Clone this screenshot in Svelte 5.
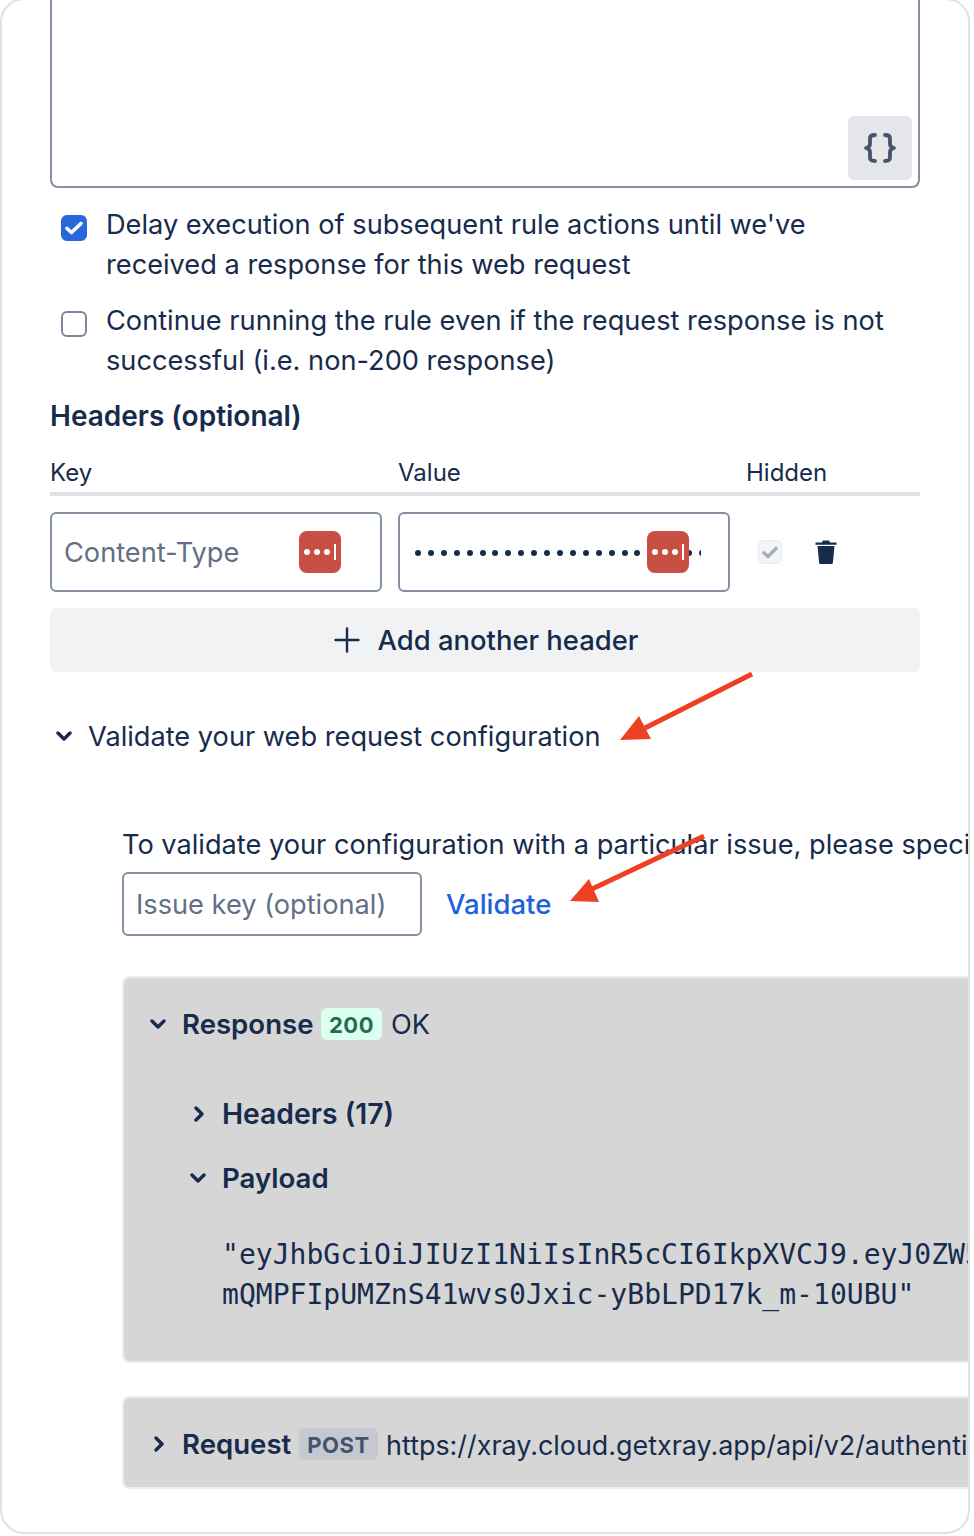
<script>
  const dots = Array.from({ length: 23 });
</script>

<main class="page">
  <section class="card">
    <div class="editor">
      <button class="code-btn" aria-label="Code">
        <svg width="34" height="34" viewBox="0 0 34 34" fill="none" stroke="#44546f" stroke-width="3.800" stroke-linecap="round" stroke-linejoin="round">
          <path d="M12 4c-3.500 0-5 1-5 3.500V13c0 2.500-1.500 3.500-4 4 2.500.5 4 1.500 4 4v5.500c0 2.500 1.500 3.500 5 3.500" />
          <path d="M22 4c3.500 0 5 1 5 3.500V13c0 2.500 1.500 3.500 4 4-2.500.5-4 1.500-4 4v5.500c0 2.500-1.500 3.500-5 3.500" />
        </svg>
      </button>
    </div>

    <div class="checks">
      <div class="check-row">
        <span class="box checked">
          <svg width="20" height="16" viewBox="0 0 20 16" fill="none" stroke="#fff" stroke-width="3.600" stroke-linecap="round" stroke-linejoin="round"><path d="M3 8.500 7.500 12.500 17 3.500" /></svg>
        </span>
        <span>Delay execution of subsequent rule actions until we've<br />received a response for this web request</span>
      </div>
      <div class="check-row">
        <span class="box"></span>
        <span>Continue running the rule even if the request response is not<br />successful (i.e. non-200 response)</span>
      </div>
    </div>

    <h3 class="headers-title">Headers (optional)</h3>

    <div class="table-head">
      <span>Key</span>
      <span>Value</span>
      <span>Hidden</span>
    </div>

    <div class="table-row">
      <div class="field">
        <span class="placeholder">Content-Type</span>
        <span class="lp"><i></i><i></i><i></i><b></b></span>
      </div>
      <div class="field">
        <span class="dots">{#each dots as _}<i></i>{/each}</span>
        <span class="lp"><i></i><i></i><i></i><b></b></span>
      </div>
      <span class="mini-check">
        <svg width="16" height="13" viewBox="0 0 16 13" fill="none" stroke="#a7adba" stroke-width="3.600" stroke-linecap="round" stroke-linejoin="round"><path d="M2 7 6 10.500 14 2.500" /></svg>
      </span>
      <svg class="trash" width="22" height="24" viewBox="0 0 22 24" fill="#172b4d">
        <path d="M8 0.500h6l1 2h6.500v2.200H.5V2.500H7z" />
        <path d="M2.500 6h17l-1.600 16.500c-.1 1-.8 1.500-1.700 1.500H5.800c-.9 0-1.600-.5-1.700-1.500z" />
      </svg>
    </div>

    <button class="add-btn">
      <svg width="26" height="26" viewBox="0 0 26 26" stroke="#172b4d" stroke-width="2.400" stroke-linecap="round"><path d="M13 1.500v23M1.500 13h23" /></svg>
      <span>Add another header</span>
    </button>

    <div class="validate-toggle">
      <svg class="chev" width="16" height="10" viewBox="0 0 16 10" fill="none" stroke="#172b4d" stroke-width="3.400" stroke-linecap="round" stroke-linejoin="round"><path d="M2 2 8 8 14 2" /></svg>
      <span>Validate your web request configuration</span>
    </div>

    <div class="validate-body">
      <p class="hint">To validate your configuration with a particular issue, please specify the issue key below.</p>
      <div class="issue-row">
        <div class="issue-input">Issue key (optional)</div>
        <span class="link">Validate</span>
      </div>

      <div class="panel response">
        <div class="panel-head">
          <svg class="chev" width="16" height="10" viewBox="0 0 16 10" fill="none" stroke="#172b4d" stroke-width="3.400" stroke-linecap="round" stroke-linejoin="round"><path d="M2 2 8 8 14 2" /></svg>
          <strong>Response</strong>
          <span class="badge ok">200</span>
          <span class="plain">OK</span>
        </div>
        <div class="sub-row first">
          <svg class="chev-r" width="10" height="16" viewBox="0 0 10 16" fill="none" stroke="#172b4d" stroke-width="3.400" stroke-linecap="round" stroke-linejoin="round"><path d="M2 2 8 8 2 14" /></svg>
          <strong class="count">Headers (17)</strong>
        </div>
        <div class="sub-row">
          <svg class="chev" width="16" height="10" viewBox="0 0 16 10" fill="none" stroke="#172b4d" stroke-width="3.400" stroke-linecap="round" stroke-linejoin="round"><path d="M2 2 8 8 14 2" /></svg>
          <strong>Payload</strong>
        </div>
        <pre class="payload">"eyJhbGciOiJIUzI1NiIsInR5cCI6IkpXVCJ9.eyJ0ZW5hbnQiOiI0ZTYxZjQ
mQMPFIpUMZnS41wvs0Jxic-yBbLPD17k_m-10UBU"</pre>
      </div>

      <div class="panel request">
        <div class="panel-head">
          <svg class="chev-r" width="10" height="16" viewBox="0 0 10 16" fill="none" stroke="#172b4d" stroke-width="3.400" stroke-linecap="round" stroke-linejoin="round"><path d="M2 2 8 8 2 14" /></svg>
          <strong>Request</strong>
          <span class="badge post">POST</span>
          <span class="plain url">https://xray.cloud.getxray.app/api/v2/authenticate</span>
        </div>
      </div>
    </div>

    <svg class="annotations" width="974" height="1536" viewBox="0 0 974 1536" fill="#ee4023" stroke="none" aria-hidden="true">
      <path d="M752 674 645 728" stroke="#ee4023" stroke-width="5" />
      <path d="M620 740 639 716 651 739z" />
      <path d="M704 836 592 889" stroke="#ee4023" stroke-width="5" />
      <path d="M570 901 589 879 599 902z" />
    </svg>
  </section>
</main>

<style>
  :global(body) {
    margin: 0;
    background: #fff;
  }
  .page {
    width: 974px;
    height: 1536px;
    overflow: hidden;
    font-family: Inter, "Liberation Sans", sans-serif;
    font-size: 27.2px;
    line-height: 40px;
    color: #172b4d;
  }
  .card {
    position: relative;
    box-sizing: border-box;
    width: 970px;
    height: 1536px;
    margin-top: -2px;
    border: 2px solid #dfe1e6;
    border-radius: 24px;
    padding-left: 48px;
    overflow: hidden;
  }
  .editor {
    box-sizing: border-box;
    width: 870px;
    height: 188px;
    border: 2px solid #8590a2;
    border-top: 0;
    border-radius: 0 0 8px 8px;
    display: flex;
    justify-content: flex-end;
    align-items: flex-end;
    padding: 0 6px 6px 0;
  }
  .code-btn {
    width: 64px;
    height: 64px;
    border: 0;
    border-radius: 6px;
    background: #e4e6ea;
    padding: 0;
    display: grid;
    place-items: center;
  }
  .checks {
    margin-top: 17px;
    display: flex;
    flex-direction: column;
    gap: 16px;
    padding-left: 11px;
  }
  .check-row {
    display: flex;
    gap: 19px;
  }
  .box {
    box-sizing: border-box;
    flex: none;
    width: 26px;
    height: 26px;
    margin-top: 10px;
    border: 2px solid #7a869a;
    border-radius: 6px;
    display: grid;
    place-items: center;
  }
  .box.checked {
    background: #2868dc;
    border-color: #2868dc;
  }
  .headers-title {
    margin: 15px 0 0;
    font-size: 28px;
    line-height: 40px;
    font-weight: 600;
  }
  .table-head {
    margin-top: 16px;
    padding-top: 2px;
    width: 870px;
    height: 38px;
    display: grid;
    grid-template-columns: 348px 348px 1fr;
    font-size: 24px;
    line-height: 38px;
    border-bottom: 4px solid #dfe1e6;
  }
  .table-row {
    margin-top: 16px;
    display: flex;
    align-items: center;
    gap: 16px;
  }
  .field {
    position: relative;
    box-sizing: border-box;
    width: 332px;
    height: 80px;
    border: 2px solid #8590a2;
    border-radius: 6px;
    padding-left: 12px;
    display: flex;
    align-items: center;
  }
  .placeholder {
    color: #626f86;
    padding-top: 2px;
  }
  .dots {
    display: flex;
    gap: 6.920px;
    margin-top: 2px;
    padding-left: 3px;
    width: 286px;
    overflow: hidden;
  }
  .dots i {
    flex: none;
    width: 6px;
    height: 6px;
    border-radius: 50%;
    background: #172b4d;
  }
  .lp {
    position: absolute;
    top: 17px;
    left: 247px;
    width: 42px;
    height: 42px;
    border-radius: 8px;
    background: #c94f42;
    display: flex;
    align-items: center;
    gap: 4px;
    padding-left: 5px;
    box-sizing: border-box;
  }
  .lp i {
    width: 6px;
    height: 6px;
    border-radius: 50%;
    background: #fff;
  }
  .lp b {
    width: 2px;
    height: 16px;
    background: #fff;
  }
  .mini-check {
    box-sizing: border-box;
    width: 24px;
    height: 24px;
    margin-left: 12px;
    border: 1px solid #ebecf0;
    border-radius: 5px;
    background: #f4f5f7;
    display: grid;
    place-items: center;
  }
  .trash {
    margin-left: 17px;
  }
  .add-btn {
    margin-top: 16px;
    width: 870px;
    height: 64px;
    border: 0;
    border-radius: 6px;
    background: #f1f2f4;
    color: #172b4d;
    font: inherit;
    font-size: 27.4px;
    font-weight: 500;
    padding: 0 0 0 2px;
    display: flex;
    align-items: center;
    justify-content: center;
    gap: 18px;
  }
  .validate-toggle span {
    padding-top: 2px;
  }
  .validate-toggle {
    margin-top: 44px;
    height: 40px;
    display: flex;
    align-items: center;
    padding-left: 6px;
    gap: 16px;
  }
  .validate-body {
    padding-left: 72px;
    width: 900px;
    margin-top: 69px;
  }
  .hint {
    margin: 0;
    white-space: nowrap;
  }
  .issue-row {
    margin-top: 7px;
    display: flex;
    align-items: center;
    gap: 24px;
  }
  .issue-input {
    box-sizing: border-box;
    width: 300px;
    height: 64px;
    border: 2px solid #8590a2;
    border-radius: 6px;
    padding-left: 12px;
    line-height: 62px;
    color: #626f86;
  }
  .link {
    color: #1d62dc;
    font-size: 27.5px;
    font-weight: 500;
  }
  .panel {
    box-sizing: border-box;
    width: 900px;
    background: #d6d6d6;
    border: 2px solid #e9ecf5;
    border-right: 0;
    border-radius: 8px 0 0 8px;
  }
  .response {
    margin-top: 40px;
    height: 387px;
    padding-top: 26px;
  }
  .request {
    margin-top: 33px;
    height: 93px;
    padding-top: 26px;
  }
  .panel-head {
    display: flex;
    align-items: center;
    white-space: nowrap;
    height: 40px;
    padding-left: 26px;
  }
  .panel-head svg,
  .panel-head .badge,
  .panel-head strong {
    flex: none;
  }
  .panel-head .plain {
    padding-top: 2px;
  }
  .panel-head .url {
    font-size: 26.9px;
  }
  .panel-head strong,
  .sub-row strong {
    font-size: 27.6px;
    font-weight: 600;
  }
  .sub-row .count {
    font-size: 28.3px;
  }
  .panel-head .chev {
    margin-right: 16px;
  }
  .panel-head .chev-r {
    margin: 0 18px 0 4px;
  }
  .badge {
    margin-left: 7.500px;
    margin-right: 9px;
    height: 32px;
    border-radius: 6px;
    line-height: 34px;
    font-size: 22px;
    font-weight: 700;
    padding: 0 8px;
    letter-spacing: 0.5px;
  }
  .badge.ok {
    background: #dcfff1;
    color: #216e4e;
  }
  .badge.post {
    background: #c5c8ce;
    color: #44546f;
    margin-right: 8px;
    padding: 0 8.500px;
  }
  .sub-row {
    height: 40px;
    margin-top: 24px;
    display: flex;
    align-items: center;
    padding-left: 66px;
  }
  .sub-row.first {
    margin-top: 50px;
    padding-left: 70px;
  }
  .sub-row .chev {
    margin-right: 16px;
  }
  .sub-row .chev-r {
    margin-right: 18px;
  }
  .payload {
    margin: 37px 0 0 98px;
    font-family: "DejaVu Sans Mono", monospace;
    font-size: 28.05px;
    line-height: 40px;
  }
  .annotations {
    position: absolute;
    left: -2px;
    top: 0;
    pointer-events: none;
  }
</style>
